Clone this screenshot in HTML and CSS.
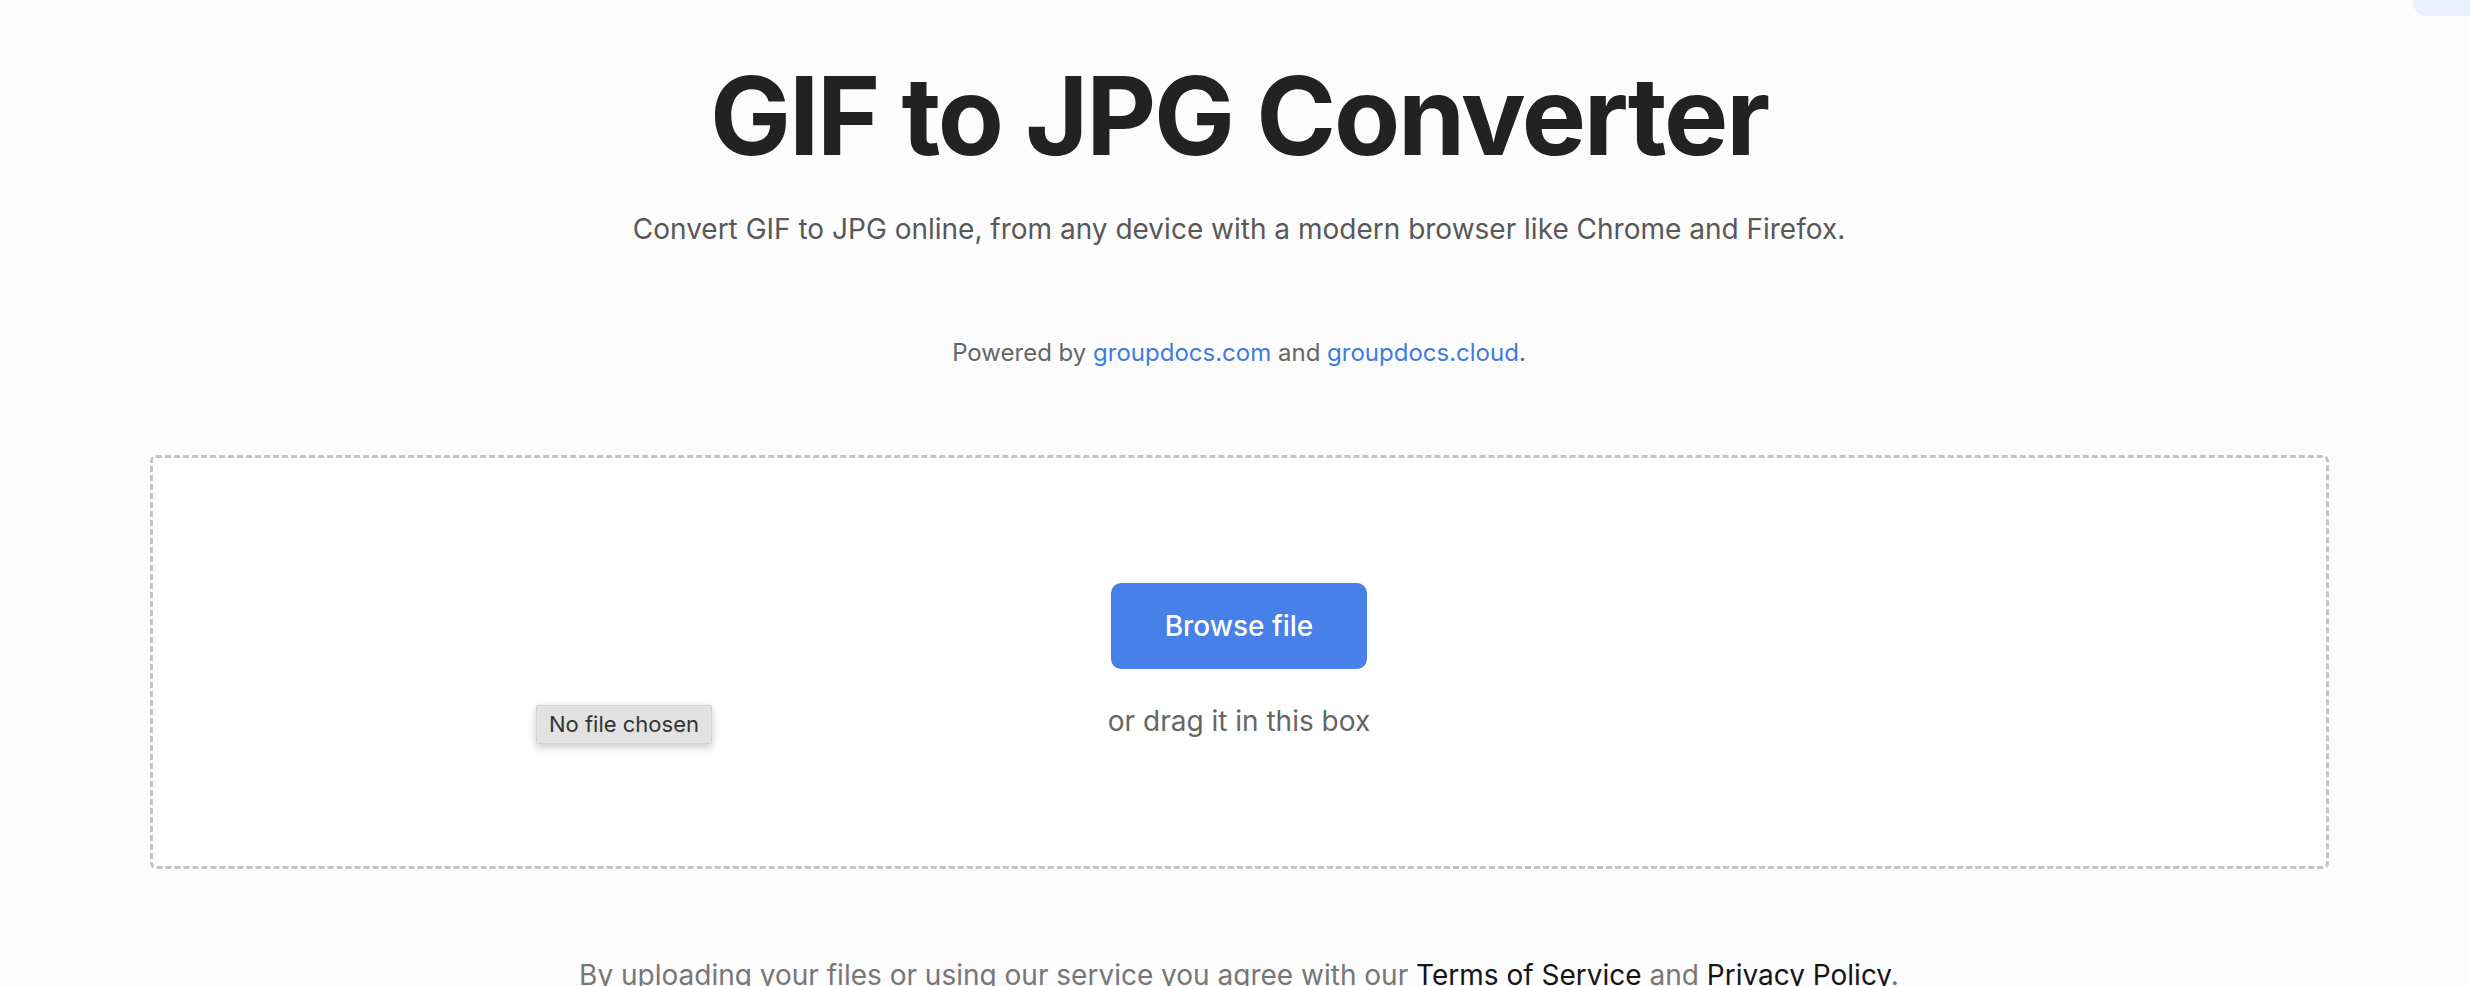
FILE: index.html
```html
<!DOCTYPE html>
<html lang="en">
<head>
<meta charset="utf-8">
<title>GIF to JPG Converter</title>
<link rel="stylesheet" href="styles.css">
</head>
<body>
<div class="corner-tab"></div>
<main class="page">
  <h1 class="title">GIF to JPG Converter</h1>
  <p class="subtitle">Convert GIF to JPG online, from any device with a modern browser like Chrome and Firefox.</p>
  <p class="powered">Powered by <a href="#" class="link">groupdocs.com</a> and <a href="#" class="link">groupdocs.cloud</a>.</p>
  <section class="dropzone">
    <button class="browse" type="button">Browse file</button>
    <p class="drag">or drag it in this box</p>
  </section>
  <p class="terms">By uploading your files or using our service you agree with our <a href="#" class="dark-link">Terms of Service</a> and <a href="#" class="dark-link">Privacy Policy</a>.</p>
</main>
<div class="tooltip">No file chosen</div>
</body>
</html>
```
FILE: styles.css
```css
html, body {
  margin: 0;
  padding: 0;
}
body {
  background: #fcfcfc;
  font-family: Inter, "Noto Sans", "Liberation Sans", sans-serif;
  position: relative;
  overflow: hidden;
  height: 986px;
}
.page {
  display: flex;
  flex-direction: column;
  align-items: center;
  text-align: center;
  padding-left: 8px;
}
.title {
  margin: 0;
  padding-top: 51px;
  font-size: 108px;
  line-height: 1.2;
  font-weight: 700;
  color: #222;
  letter-spacing: -2.2px;
}
.subtitle {
  margin: 27px 0 0;
  font-size: 28px;
  line-height: 1.5;
  color: #585858;
}
.powered {
  margin: 85px 0 0;
  font-size: 24px;
  line-height: 1.5;
  color: #666;
}
.link {
  color: #3f7be0;
  text-decoration: none;
}
.dropzone {
  box-sizing: border-box;
  margin-top: 84px;
  width: 2179px;
  height: 414px;
  border: 3px dashed #c4c4c4;
  border-radius: 6px;
  background: #fff;
  display: flex;
  flex-direction: column;
  align-items: center;
  padding-top: 125px;
}
.browse {
  width: 256px;
  height: 86px;
  border: none;
  border-radius: 10px;
  background: #4780e8;
  color: #fff;
  font-family: Inter, "Noto Sans", sans-serif;
  font-size: 28px;
  font-weight: 500;
  padding: 0;
}
.drag {
  margin: 31px 0 0;
  font-size: 28px;
  line-height: 1.5;
  color: #666;
}
.terms {
  margin: 85px 0 0;
  font-size: 28px;
  line-height: 1.5;
  color: #777;
}
.dark-link {
  color: #151515;
  text-decoration: none;
}
.tooltip {
  position: absolute;
  left: 536px;
  top: 705px;
  box-sizing: border-box;
  width: 176px;
  height: 39px;
  background: #e2e2e2;
  border: 1px solid #d2d2d2;
  border-radius: 2px;
  box-shadow: 0 3px 8px rgba(0, 0, 0, 0.22);
  font-family: Inter, "Noto Sans", sans-serif;
  font-size: 22px;
  line-height: 37px;
  color: #333;
  text-align: center;
}
.corner-tab {
  position: absolute;
  left: 2413px;
  top: -20px;
  width: 80px;
  height: 36px;
  background: #eaf0fc;
  border-radius: 14px;
}
```
